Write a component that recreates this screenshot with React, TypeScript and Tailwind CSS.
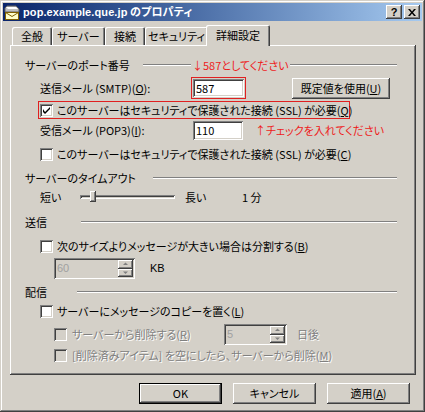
const raised =
  "shadow-[inset_-1px_-1px_#404040,inset_1px_1px_#ffffff,inset_-2px_-2px_#808080,inset_2px_2px_#d4d0c8]";
const sunken =
  "shadow-[inset_1px_1px_#808080,inset_-1px_-1px_#ffffff,inset_2px_2px_#404040,inset_-2px_-2px_#d4d0c8]";
const jp = "font-['Noto_Sans_CJK_JP','Noto_Sans',sans-serif] [font-feature-settings:'palt']";
const dim = "text-[#808080] [text-shadow:1px_1px_0_#ffffff]";

function Check({ checked = false, disabled = false }: { checked?: boolean; disabled?: boolean }) {
  return (
    <div
      className={`w-[13px] h-[13px] shrink-0 flex items-center justify-center ${sunken} ${
        disabled ? "bg-[#d4d0c8]" : "bg-white"
      }`}
    >
      {checked && (
        <svg width="7" height="7" viewBox="0 0 7 7">
          <path d="M0 2v3l2 2 5-5V-0L2 5z" fill="#000" />
        </svg>
      )}
    </div>
  );
}

function Header({ label, w, children }: { label: string; w: number; children?: React.ReactNode }) {
  return (
    <div className="flex items-center h-[16px]">
      <span className="shrink-0" style={{ width: w }}>
        {label}
      </span>
      {children ?? <Etched />}
    </div>
  );
}

function Etched({ w }: { w?: number }) {
  return (
    <div
      className={`h-[2px] border-t border-t-[#808080] border-b border-b-white ${w ? "shrink-0" : "flex-1"}`}
      style={w ? { width: w } : undefined}
    />
  );
}

function Spinner({ value, w }: { value: string; w: number }) {
  return (
    <div className={`flex items-center h-[21px] bg-[#d4d0c8] p-[2px] ${sunken}`} style={{ width: w }}>
      <span className="flex-1 pl-[1px] text-[#a0a0a0] [text-shadow:none] font-['Liberation_Sans',sans-serif]">
        {value}
      </span>
      <div className="flex flex-col w-[15px] h-[17px]">
        {["M2 4h5L4.5 1.5z", "M2 1.5h5L4.5 4z"].map((d) => (
          <div key={d} className={`h-[8.5px] flex items-center justify-center bg-[#d4d0c8] ${raised}`}>
            <svg width="9" height="6" viewBox="0 0 9 6">
              <path d={d} fill="#808080" />
            </svg>
          </div>
        ))}
      </div>
    </div>
  );
}

function Button({ label, w, def = false }: { label: React.ReactNode; w: number; def?: boolean }) {
  return (
    <div
      className={`h-[21px] flex items-center justify-center bg-[#d4d0c8] ${
        def ? "border border-black" : ""
      }`}
      style={{ width: w }}
    >
      <div className={`w-full h-full flex items-center justify-center ${raised}`}>{label}</div>
    </div>
  );
}

const tabs = [
  { label: "全般", w: 40 },
  { label: "サーバー", w: 53 },
  { label: "接続", w: 40 },
  { label: "セキュリティ", w: 63 },
];

export default function App() {
  return (
    <div
      className={`w-[425px] h-[412px] bg-[#d4d0c8] p-[3px] text-[11px] leading-none text-black whitespace-nowrap ${jp} shadow-[inset_-1px_-1px_#404040,inset_1px_1px_#d4d0c8,inset_-2px_-2px_#808080,inset_2px_2px_#ffffff]`}
    >
      {/* Title bar */}
      <div className="h-[18px] flex items-center bg-linear-to-r from-[#0a246a] to-[#a6caf0] pl-[1px] pr-[2px]">
        <svg width="16" height="16" viewBox="0 0 16 16" className="shrink-0">
          <path d="M3 2h9l3 3v3H1V4z" fill="#c0c0c0" stroke="#606060" />
          <path d="M2 3h10l2 2H4z" fill="#ffffff" />
          <rect x="1.5" y="8.5" width="13" height="7" fill="#ffffcc" stroke="#806000" />
          <path d="M1.5 8.5l6.5 4 6.5-4" fill="none" stroke="#806000" />
        </svg>
        <span className="ml-[3px] text-white font-bold text-[11px] tracking-[0.1px]">
          <span className="font-['Liberation_Sans',sans-serif]">pop.example.que.jp</span> のプロパティ
        </span>
        <div className="flex-1" />
        <div className={`w-[16px] h-[14px] bg-[#d4d0c8] flex items-center justify-center font-bold text-[11px] font-['Liberation_Sans',sans-serif] ${raised}`}>
          ?
        </div>
        <div className={`ml-[2px] w-[16px] h-[14px] bg-[#d4d0c8] flex items-center justify-center ${raised}`}>
          <svg width="8" height="7" viewBox="0 0 8 7">
            <path d="M0 0h2l2 2.5L6 0h2L5 3.5 8 7H6L4 4.5 2 7H0l3-3.5z" fill="#000" />
          </svg>
        </div>
      </div>

      {/* Tabs */}
      <div className="relative z-10 mt-[4px] ml-[7px] flex items-end h-[21px]">
        <div className="w-[2px]" />
        {tabs.map((t) => (
          <div
            key={t.label}
            className="h-[18px] mb-[1px] flex items-center justify-center rounded-t-[2px] shadow-[inset_1px_1px_#ffffff,inset_-1px_0_#404040,inset_-2px_0_#808080]"
            style={{ width: t.w }}
          >
            {t.label}
          </div>
        ))}
        <div className="-ml-[2px] w-[64px] h-[21px] bg-[#d4d0c8] flex items-center justify-center pb-[1px] rounded-t-[2px] shadow-[inset_1px_1px_#ffffff,inset_-1px_0_#404040,inset_-2px_0_#808080]">
          詳細設定
        </div>
      </div>

      {/* Panel */}
      <div
        className={`-mt-[1px] ml-[7px] w-[406px] h-[330px] pt-[12px] pl-[15px] pr-[19px] ${raised}`}
      >
        <Header label="サーバーのポート番号" w={118}>
          <Etched w={48} />
          <span className="text-[#ee1c1c] px-[1px]">↓587としてください</span>
          <Etched />
        </Header>

        <div className="mt-[4px] flex items-center h-[22px] pl-[15px]">
          <span className="w-[151px] shrink-0">送信メール (SMTP)(<u>O</u>):</span>
          <div className="w-[55px] h-[22px] border border-[#e02020] p-[1px]">
            <div className={`h-full bg-white ${sunken} flex items-center pl-[3px]`}>587</div>
          </div>
          <div className="ml-[46px]">
            <Button w={98} label={<>既定値を使用(<u>U</u>)</>} />
          </div>
        </div>

        <div className="mt-[2px] ml-[13px] w-[312px] h-[18px] border border-[#e02020] pl-[1px] flex items-center">
          <Check checked />
          <span className="ml-[4px]">
            このサーバーはセキュリティで保護された接続 (SSL) が必要(<u>Q</u>)
          </span>
        </div>

        <div className="mt-[2px] flex items-center h-[19px] pl-[15px]">
          <span className="w-[153px] shrink-0">受信メール (POP3)(<u>I</u>):</span>
          <div className={`w-[50px] h-[19px] bg-white ${sunken} flex items-center pl-[3px]`}>110</div>
          <span className="ml-[12px] text-[#ee1c1c]">↑チェックを入れてください</span>
        </div>

        <div className="mt-[6px] flex items-center h-[16px] pl-[15px]">
          <Check />
          <span className="ml-[4px]">
            このサーバーはセキュリティで保護された接続 (SSL) が必要(<u>C</u>)
          </span>
        </div>

        <div className="mt-[8px]">
          <Header label="サーバーのタイムアウト" w={128} />
        </div>

        <div className="mt-[3px] flex items-center h-[16px] pl-[15px]">
          <span className="w-[40px] shrink-0">短い</span>
          <div className="relative w-[95px] h-[16px] flex items-center">
            <div className={`w-full h-[4px] ${sunken}`} />
            <div className={`absolute left-[10px] top-[2px] w-[6px] h-[11px] bg-[#d4d0c8] ${raised}`} />
          </div>
          <span className="ml-[10px] w-[57px] shrink-0">長い</span>
          <span>1 分</span>
        </div>

        <div className="mt-[9px]">
          <Header label="送信" w={56} />
        </div>

        <div className="mt-[8px] flex items-center h-[16px] pl-[15px]">
          <Check />
          <span className="ml-[4px]">
            次のサイズよりメッセージが大きい場合は分割する(<u>B</u>)
          </span>
        </div>

        <div className="mt-[4px] flex items-center pl-[29px]">
          <Spinner value="60" w={81} />
          <span className="ml-[15px] font-['Liberation_Sans',sans-serif]">KB</span>
        </div>

        <div className="mt-[5px]">
          <Header label="配信" w={52} />
        </div>

        <div className="mt-[3px] flex items-center h-[16px] pl-[15px]">
          <Check />
          <span className="ml-[4px]">
            サーバーにメッセージのコピーを置く(<u>L</u>)
          </span>
        </div>

        <div className={`mt-[6px] flex items-center h-[19px] pl-[29px] ${dim}`}>
          <Check disabled />
          <span className="ml-[5px] w-[152px] shrink-0">
            サーバーから削除する(<u>R</u>)
          </span>
          <Spinner value="5" w={63} />
          <span className="ml-[10px]">日後</span>
        </div>

        <div className={`mt-[3px] flex items-center h-[16px] pl-[29px] ${dim}`}>
          <Check disabled />
          <span className="ml-[5px]">
            [削除済みアイテム] を空にしたら、サーバーから削除(<u>M</u>)
          </span>
        </div>
      </div>

      {/* Dialog buttons */}
      <div className="mt-[8px] flex pl-[136px]">
        <Button w={83} def label="OK" />
        <div className="ml-[11px]">
          <Button w={83} label="キャンセル" />
        </div>
        <div className="ml-[11px]">
          <Button w={83} label={<>適用(<u>A</u>)</>} />
        </div>
      </div>
    </div>
  );
}
